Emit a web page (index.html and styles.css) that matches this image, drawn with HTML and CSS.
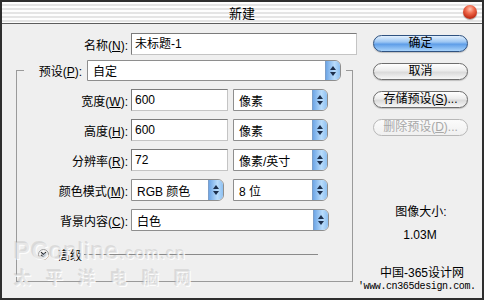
FILE: index.html
```html
<!DOCTYPE html>
<html lang="zh-CN">
<head>
  <meta charset="UTF-8" />
  <meta name="viewport" content="width=device-width, initial-scale=1.0"/>
  <title>新建</title>
  <link rel="stylesheet" href="styles.css">
</head>
<body>

  <div class="window">
    <div class="titlebar">
      <span class="title">新建</span>
      <span class="close"></span>
    </div>

    <div class="content">
      <div class="main">
        <div class="row name-row">
          <label class="label">名称(<u>N</u>):</label>
          <div class="field name-field">未标题-1</div>
        </div>

        <fieldset class="group">
          <legend class="preset">
            <label class="preset-label">预设(<u>P</u>):</label>
            <div class="select preset-select">自定<span class="arrows"></span></div>
          </legend>

          <div class="row">
            <label class="label">宽度(<u>W</u>):</label>
            <div class="field num">600</div>
            <div class="select unit">像素<span class="arrows"></span></div>
          </div>

          <div class="row">
            <label class="label">高度(<u>H</u>):</label>
            <div class="field num">600</div>
            <div class="select unit">像素<span class="arrows"></span></div>
          </div>

          <div class="row">
            <label class="label">分辨率(<u>R</u>):</label>
            <div class="field num">72</div>
            <div class="select unit">像素/英寸<span class="arrows"></span></div>
          </div>

          <div class="row">
            <label class="label">颜色模式(<u>M</u>):</label>
            <div class="select mode">RGB 颜色<span class="arrows"></span></div>
            <div class="select unit depth">8 位<span class="arrows"></span></div>
          </div>

          <div class="row">
            <label class="label">背景内容(<u>C</u>):</label>
            <div class="select bg">白色<span class="arrows"></span></div>
          </div>

          <!-- Advanced toggle -->
          <div class="advanced">
            <span class="toggle">
              <svg width="11" height="11" viewBox="0 0 11 11">
                <circle cx="5.5" cy="5.5" r="5" fill="#f4f4f4" stroke="#9a9a9a"/>
                <path d="M3 3.2 L5.5 5.4 L8 3.2 M3 5.9 L5.5 8.1 L8 5.9" fill="none" stroke="#222" stroke-width="1.1"/>
              </svg>
            </span>
            <span class="adv-text">高级</span>
            <span class="adv-line"></span>
          </div>
        </fieldset>
      </div>

      <div class="side">
        <div class="btn default">确定</div>
        <div class="btn">取消</div>
        <div class="btn">存储预设(<u>S</u>)...</div>
        <div class="btn disabled">删除预设(<u>D</u>)...</div>

        <div class="size-title">图像大小:</div>
        <div class="size-value">1.03M</div>

        <div class="site">
          <div class="site-name">中国-365设计网</div>
          <div class="site-url">'www.cn365design.com.</div>
        </div>
      </div>
    </div>

    <!-- watermark over the dialog -->
    <div class="watermark">
      <div class="wm-top"><b>PC</b>online<small>.com.cn</small></div>
      <div class="wm-bottom">太平洋电脑网</div>
    </div>
  </div>

</body>
</html>
```

FILE: styles.css
```css
body {
  margin: 0;
  background-color: #efefef;
  font-family: "Liberation Sans", "Noto Sans CJK SC", sans-serif;
  font-size: 12px;
  color: #000;
}

.window {
  position: relative;
  width: 484px;
  height: 300px;
  box-sizing: border-box;
  border: 2px solid #2e2e2e;
  background-color: #efefef;
  overflow: hidden;
}

.titlebar {
  display: flex;
  align-items: center;
  justify-content: center;
  position: relative;
  height: 21px;
  border-bottom: 1px solid #5c5c5c;
  background: repeating-linear-gradient(#fdfdfd 0, #fdfdfd 2px, #e4e4e4 2px, #e4e4e4 4px);
}

.title {
  font-size: 13px;
  font-family: "Noto Sans CJK SC", sans-serif;
}

.close {
  position: absolute;
  right: 5px;
  top: 3px;
  width: 14px;
  height: 14px;
  border-radius: 50%;
  background: radial-gradient(circle at 50% 30%, #ffc2b0 0, #f06a4c 35%, #c7321a 70%, #7d1a0c 100%);
  box-shadow: 0 1px 1px rgba(0,0,0,0.35);
}

.content {
  display: flex;
  height: 274px;
}

.main {
  width: 356px;
}

.row {
  display: flex;
  align-items: center;
  height: 22px;
  margin-top: 8px;
}

.name-row {
  margin-top: 9px;
}

.label {
  width: 111px;
  margin-right: 3px;
  text-align: right;
  white-space: nowrap;
}

.name-row .label {
  width: 126px;
}

.field {
  height: 22px;
  box-sizing: border-box;
  border: 1px solid;
  border-color: #7b7b7b #c4c4c4 #c4c4c4 #7b7b7b;
  background: #fff;
  padding-left: 3px;
  line-height: 20px;
}

.name-field {
  width: 226px;
}

.num {
  width: 97px;
}

.select {
  display: flex;
  align-items: center;
  height: 22px;
  box-sizing: border-box;
  border: 1px solid #8e8e8e;
  border-radius: 0 6px 6px 0;
  background: #fff;
  padding-left: 5px;
  white-space: nowrap;
}

.arrows {
  position: relative;
  margin-left: auto;
  width: 14px;
  height: 20px;
  border-left: 1px solid #7d9fc9;
  border-radius: 0 5px 5px 0;
  background: linear-gradient(to right, #6ea6e6, #b9dcfb 60%, #8dc0f2);
}

.arrows::before,
.arrows::after {
  content: "";
  position: absolute;
  left: 4px;
  border-left: 3px solid transparent;
  border-right: 3px solid transparent;
}

.arrows::before {
  top: 5px;
  border-bottom: 4px solid #1c2f4c;
}

.arrows::after {
  top: 11px;
  border-top: 4px solid #1c2f4c;
}

.unit {
  width: 95px;
  margin-left: 5px;
}

.depth {
  margin-left: 9px;
}

.mode {
  width: 93px;
}

.bg {
  width: 198px;
}

.group {
  margin: 5px 0 0 14px;
  width: 337px;
  box-sizing: border-box;
  padding: 0 0 20px 0;
  border: 1px solid #9a9a9a;
}

.preset {
  display: flex;
  align-items: center;
  margin-left: 7px;
  padding: 0 5px 0 0;
}

.preset-label {
  width: 58px;
  text-align: right;
}

.preset-select {
  width: 254px;
  height: 21px;
  margin-left: 5px;
}

.preset-select .arrows {
  height: 19px;
}

.advanced {
  display: flex;
  align-items: center;
  height: 14px;
  margin-top: 16px;
  padding-left: 21px;
}

.toggle {
  display: flex;
  width: 11px;
  height: 11px;
}

.adv-text {
  margin-left: 9px;
}

.adv-line {
  flex: 1;
  height: 1px;
  margin: 0 34px 0 2px;
  background: #8a8a8a;
}

.side {
  display: flex;
  flex-direction: column;
  width: 124px;
  padding-top: 11px;
}

.btn {
  width: 95px;
  height: 17px;
  margin: 0 0 11px 15px;
  box-sizing: border-box;
  border: 1px solid #6d6d6d;
  border-radius: 9px;
  text-align: center;
  line-height: 15px;
  background: linear-gradient(#ffffff, #ececec 45%, #dadada 55%, #f7f7f7);
  box-shadow: 0 1px 1px rgba(0,0,0,0.2);
  white-space: nowrap;
}

.btn.default {
  border-color: #2f5280;
  background: linear-gradient(#e3f0fd, #9cc6f3 40%, #5f9ee8 55%, #a8d3fb);
}

.btn.disabled {
  color: #a8a8a8;
  border-color: #b8b8b8;
  background: linear-gradient(#fbfbfb, #f0f0f0);
  box-shadow: none;
}

.size-title {
  margin-top: 58px;
  text-align: center;
  line-height: 14px;
  padding-left: 2px;
}

.size-value {
  margin-top: 9px;
  text-align: center;
  line-height: 14px;
}

.site {
  margin-top: auto;
  padding-bottom: 5px;
}

.site-name {
  text-align: center;
  padding-left: 4px;
  line-height: 14px;
}

.site-url {
  font-family: "Liberation Mono", monospace;
  font-size: 10px;
  letter-spacing: -0.4px;
  line-height: 13px;
  white-space: nowrap;
}

.watermark {
  position: absolute;
  left: 12px;
  top: 236px;
  color: rgba(215,215,215,0.55);
  text-shadow: 1px 1px 0 rgba(255,255,255,0.9), -1px -1px 0 rgba(160,160,160,0.25);
  pointer-events: none;
}

.wm-top {
  font-size: 24px;
  line-height: 26px;
  letter-spacing: 1px;
}

.wm-top small {
  font-size: 17px;
}

.wm-bottom {
  font-family: "Noto Sans CJK SC", sans-serif;
  font-size: 17px;
  line-height: 20px;
  letter-spacing: 15px;
  font-weight: bold;
}
```
